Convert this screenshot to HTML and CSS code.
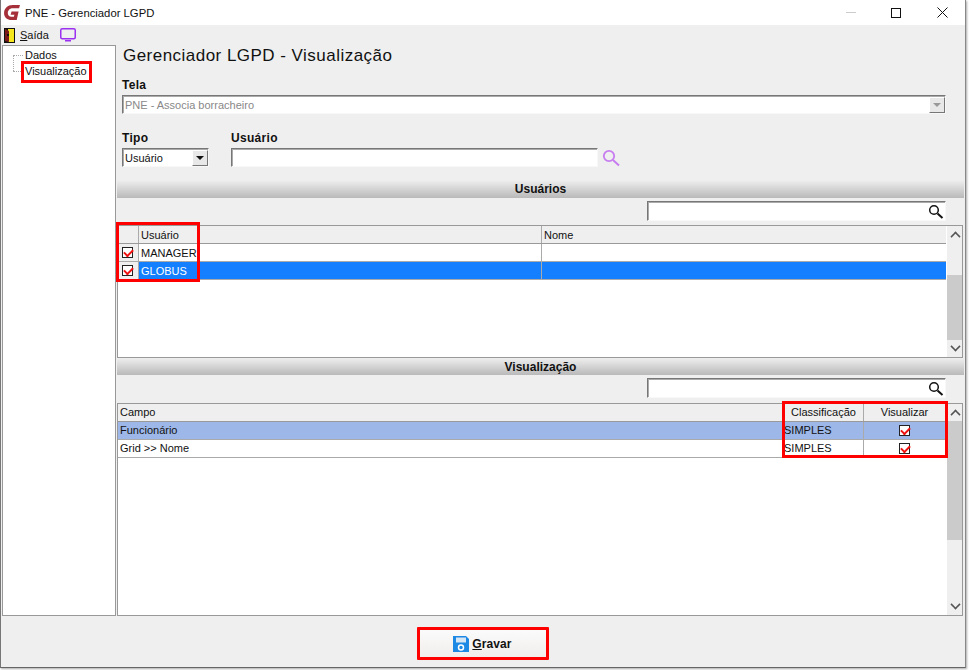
FILE: index.html
```html
<!DOCTYPE html>
<html lang="pt">
<head>
<meta charset="utf-8">
<title>PNE - Gerenciador LGPD</title>
<link rel="stylesheet" href="styles.css">
</head>
<body>
<div class="window">
  <header class="titlebar">
    <svg class="logo" width="17" height="15" viewBox="0 1 18 16"><path d="M17 1H9C4 1 0 4.500 0 9.500S3.500 17 8 17H13.500L15.500 8H8L7 11.500H11L10.500 13.500H8C5 13.500 4 11.500 4 9.500 4 7 6 4.500 9 4.500H16Z" fill="#a5303a"/></svg>
    <span class="title">PNE - Gerenciador LGPD</span>
    <span class="winbtn min"></span>
    <span class="winbtn max"></span>
    <svg class="winclose" width="11" height="11" viewBox="0 0 11 11"><path d="M.5.500 10.500 10.500M10.500.500.500 10.500" stroke="#111" fill="none"/></svg>
  </header>
  <nav class="menubar">
    <svg class="door" width="11" height="15" viewBox="0 0 11 15"><rect width="11" height="15" fill="#111"/><rect x="4" y="1" width="6" height="13" fill="#f5e61e"/><path d="M1 1 5 3V14L1 13Z" fill="#7a1a1a"/><rect x="3" y="6" width="2" height="2" fill="#111"/></svg>
    <span class="menuitem"><u>S</u>aída</span>
    <svg class="tv" width="16" height="14" viewBox="0 0 16 14"><rect x=".75" y=".75" width="14.500" height="10" rx="1.500" fill="none" stroke="#9b30f0" stroke-width="1.500"/><rect x="5" y="12" width="6" height="1.500" fill="#9b30f0"/></svg>
  </nav>
  <div class="main">
    <aside class="tree">
      <div class="node first">Dados</div>
      <div class="node">Visualização</div>
      <span class="mark mark-tree"></span>
    </aside>
    <section class="content">
      <h1 class="heading">Gerenciador LGPD - Visualização</h1>
      <div class="fields">
        <label class="lbl">Tela</label>
        <div class="sunken combo disabled"><span>PNE - Associa borracheiro</span><span class="drop"><i></i></span></div>
        <div class="row2">
          <div class="col tipo">
            <label class="lbl">Tipo</label>
            <div class="sunken combo"><span>Usuário</span><span class="drop"><i></i></span></div>
          </div>
          <div class="col user">
            <label class="lbl">Usuário</label>
            <div class="sunken"></div>
          </div>
          <svg class="lens" width="18" height="18" viewBox="0 0 18 18"><circle cx="7" cy="7" r="5.200" fill="none" stroke="#c77df0" stroke-width="1.800"/><path d="M11 11 17 16.500" stroke="#c77df0" stroke-width="2" fill="none"/></svg>
        </div>
      </div>

      <div class="band">Usuários</div>
      <div class="filter">
        <div class="sunken search"><svg width="16" height="15" viewBox="0 0 16 15"><circle cx="6" cy="6" r="4.300" fill="none" stroke="#111" stroke-width="1.500"/><path d="M9.500 9.500 14.500 14" stroke="#111" stroke-width="2" fill="none"/></svg></div>
      </div>
      <div class="grid grid-users">
        <div class="table">
          <div class="tr head"><div class="c chk"></div><div class="c u">Usuário</div><div class="c grow">Nome</div></div>
          <div class="tr"><div class="c chk"><span class="check"></span></div><div class="c u">MANAGER</div><div class="c grow"></div></div>
          <div class="tr sel"><div class="c chk"><span class="check"></span></div><div class="c u">GLOBUS</div><div class="c grow"></div></div>
        </div>
        <div class="scroll s1"><span class="up"></span><span class="thumb"></span><span class="dn"></span></div>
        <span class="mark mark-users"></span>
      </div>

      <div class="band band-short">Visualização</div>
      <div class="filter filter-tall">
        <div class="sunken search"><svg width="16" height="15" viewBox="0 0 16 15"><circle cx="6" cy="6" r="4.300" fill="none" stroke="#111" stroke-width="1.500"/><path d="M9.500 9.500 14.500 14" stroke="#111" stroke-width="2" fill="none"/></svg></div>
      </div>
      <div class="grid grid-fields">
        <div class="table">
          <div class="tr head"><div class="c grow">Campo</div><div class="c cl ctr">Classificação</div><div class="c vi ctr">Visualizar</div></div>
          <div class="tr sel2"><div class="c grow">Funcionário</div><div class="c cl">SIMPLES</div><div class="c vi ctr"><span class="check"></span></div></div>
          <div class="tr"><div class="c grow">Grid &gt;&gt; Nome</div><div class="c cl">SIMPLES</div><div class="c vi ctr"><span class="check"></span></div></div>
        </div>
        <div class="scroll s2"><span class="up"></span><span class="thumb"></span><span class="dn"></span></div>
        <span class="mark mark-fields"></span>
      </div>
    </section>
  </div>
  <footer class="footer">
    <button class="save">
      <svg width="16" height="16" viewBox="0 0 16 16"><path d="M0 0H13L16 3V16H0Z" fill="#1e88e5"/><rect x="3" y="1.500" width="10" height="5" fill="#d7e6f5"/><circle cx="8" cy="11.500" r="2.500" fill="none" stroke="#fff" stroke-width="1.500"/></svg>
      <span><u>G</u>ravar</span>
    </button>
  </footer>
</div>
</body>
</html>
```
FILE: styles.css
```css
* { box-sizing: border-box; }
html, body { margin: 0; height: 100%; background: #fff; }
body { font: 11px "Liberation Sans", Arial, sans-serif; color: #111; overflow: hidden; }
.window { width: 966px; height: 668px; background: #efefef; display: flex; flex-direction: column; border-left: 1px solid #777; border-right: 1px solid #888; border-bottom: 1px solid #666; box-shadow: 1px 1px 2px #aaa; }
.titlebar { height: 25px; background: #fff; display: flex; align-items: center; padding-left: 3px; flex: none; }
.logo { margin-right: 4px; }
.title { font-size: 11.300px; flex: 1; }
.winbtn.min { width: 10px; height: 1px; background: #ccc; margin-right: 35px; }
.winbtn.max { width: 10px; height: 10px; border: 1px solid #111; margin-right: 36px; }
.winclose { margin-right: 17px; }
.menubar { height: 20px; display: flex; align-items: center; padding-left: 3px; flex: none; }
.menuitem { margin-left: 5px; margin-right: 11px; }
.main { flex: none; height: 571px; display: flex; padding-left: 1px; }
.tree { position: relative; width: 114px; height: 571px; border: 1px solid #999; background: #fff; padding: 1px 0 0 22px; line-height: 16px; }
.node { position: relative; }
.node::before { content: ""; position: absolute; left: -12px; top: 8px; width: 10px; border-top: 1px dotted #aaa; }
.node.first::after { content: ""; position: absolute; left: -12px; top: 8px; height: 16px; border-left: 1px dotted #aaa; }
.content { flex: 1; min-width: 0; margin: 0 1px; }
.heading { font: 400 17px "Liberation Sans", Arial, sans-serif; letter-spacing: .47px; margin: 0; padding: 1px 0 0 6px; height: 33px; line-height: 20px; color: #111; }
.fields { padding: 0 18px 0 5px; height: 102px; }
.lbl { display: block; font-weight: 700; font-size: 12px; height: 15px; line-height: 15px; letter-spacing: .3px; margin-bottom: 2px; }
.sunken { height: 19px; background: #fff; border: 1px solid; border-color: #777 #f8f8f8 #f8f8f8 #777; box-shadow: inset 1px 1px 0 #aaa; }
.combo { display: flex; align-items: center; padding-left: 2px; justify-content: space-between; }
.combo.disabled { color: #888; margin-bottom: 17px; }
.drop { width: 16px; height: 16px; background: #e8e8e8; border: 1px solid; border-color: #fff #777 #777 #fff; display: flex; align-items: center; justify-content: center; }
.drop i { border: 4px solid transparent; border-top: 4px solid #111; border-bottom: 0; }
.disabled .drop i { border-top-color: #999; }
.row2 { display: flex; align-items: flex-end; }
.col.tipo { width: 87px; margin-right: 22px; }
.col.user { width: 367px; }
.lens { margin: 0 0 0 4px; }
.band { height: 18px; line-height: 18px; text-align: center; font-weight: 700; font-size: 12px; background: linear-gradient(#efefef, #b9b9b9); }
.band-short { height: 17px; }
.filter { height: 27px; padding: 3px 18px 0 0; display: flex; justify-content: flex-end; }
.filter-tall { height: 28px; }
.search { width: 299px; height: 20px; display: flex; justify-content: flex-end; align-items: center; padding-right: 1px; }
.grid { position: relative; display: flex; background: #fff; border: 1px solid #999; margin-right: 1px; }
.grid-users { height: 133px; }
.grid-fields { height: 213px; }
.table { flex: 1; min-width: 0; }
.tr { display: flex; height: 18px; border-bottom: 1px solid #aaa; }
.tr.head { background: #efefef; height: 18px; border-bottom: 1px solid #999; }
.tr.sel { background: #1580ff; color: #fff; }
.tr.sel2 { background: #9db8e8; }
.c { border-right: 1px solid #aaa; padding-left: 2px; line-height: 17px; white-space: nowrap; }
.grid-users .c { line-height: 19px; }
.grow { flex: 1; border-right: 0; }
.chk { width: 21px; display: flex; align-items: center; justify-content: center; padding: 0 1px 0 0; background: #efefef; }
.u { width: 403px; }
.cl { width: 80px; padding-left: 0; }
.vi { width: 82px; border-right: 0; }
.ctr { text-align: center; display: flex; align-items: center; justify-content: center; padding: 0; }
.vi.ctr { padding-right: 1px; }
.grid-fields .grow { border-right: 1px solid #aaa; }
.check { display: block; width: 11px; height: 11px; background: #fff; border: 1px solid #222; position: relative; }
.check::after { content: ""; position: absolute; left: 1px; top: 1px; width: 7px; height: 4px; border-left: 2px solid #f01010; border-bottom: 2px solid #f01010; transform: rotate(-45deg); }
.scroll { width: 16px; flex: none; background: #efefef; display: flex; flex-direction: column; border-left: 1px solid #fff; }
.thumb { flex: none; background: #cbcbcb; margin-right: 0; }
.s1 .thumb { height: 65px; margin-top: 32px; }
.s2 .thumb { height: 119px; }
.up, .dn { height: 17px; flex: none; position: relative; }
.dn { margin-top: auto; }
.up::after, .dn::after { content: ""; position: absolute; left: 4px; top: 6px; width: 7px; height: 7px; border-left: 2px solid #555; border-top: 2px solid #555; transform: scale(.8) rotate(45deg); }
.dn::after { top: 2px; transform: scale(.8) rotate(225deg); }
.footer { flex: 1; display: flex; justify-content: center; padding-top: 11px; padding-right: 1px; }
.save { width: 132px; height: 33px; display: flex; align-items: center; justify-content: center; gap: 3px; background: linear-gradient(#fbfbfb, #f1eeec); border: 3px solid #f00; border-radius: 1px; font: 700 12px "Liberation Sans", Arial, sans-serif; letter-spacing: .1px; color: #111; padding: 0; }
.mark { position: absolute; border: 3px solid #f00; pointer-events: none; }
.mark-tree { left: 18px; top: 15px; width: 71px; height: 22px; }
.mark-users { left: -2px; top: -4px; width: 84px; height: 60px; }
.mark-fields { left: 664px; top: -3px; width: 166px; height: 57px; }
```
